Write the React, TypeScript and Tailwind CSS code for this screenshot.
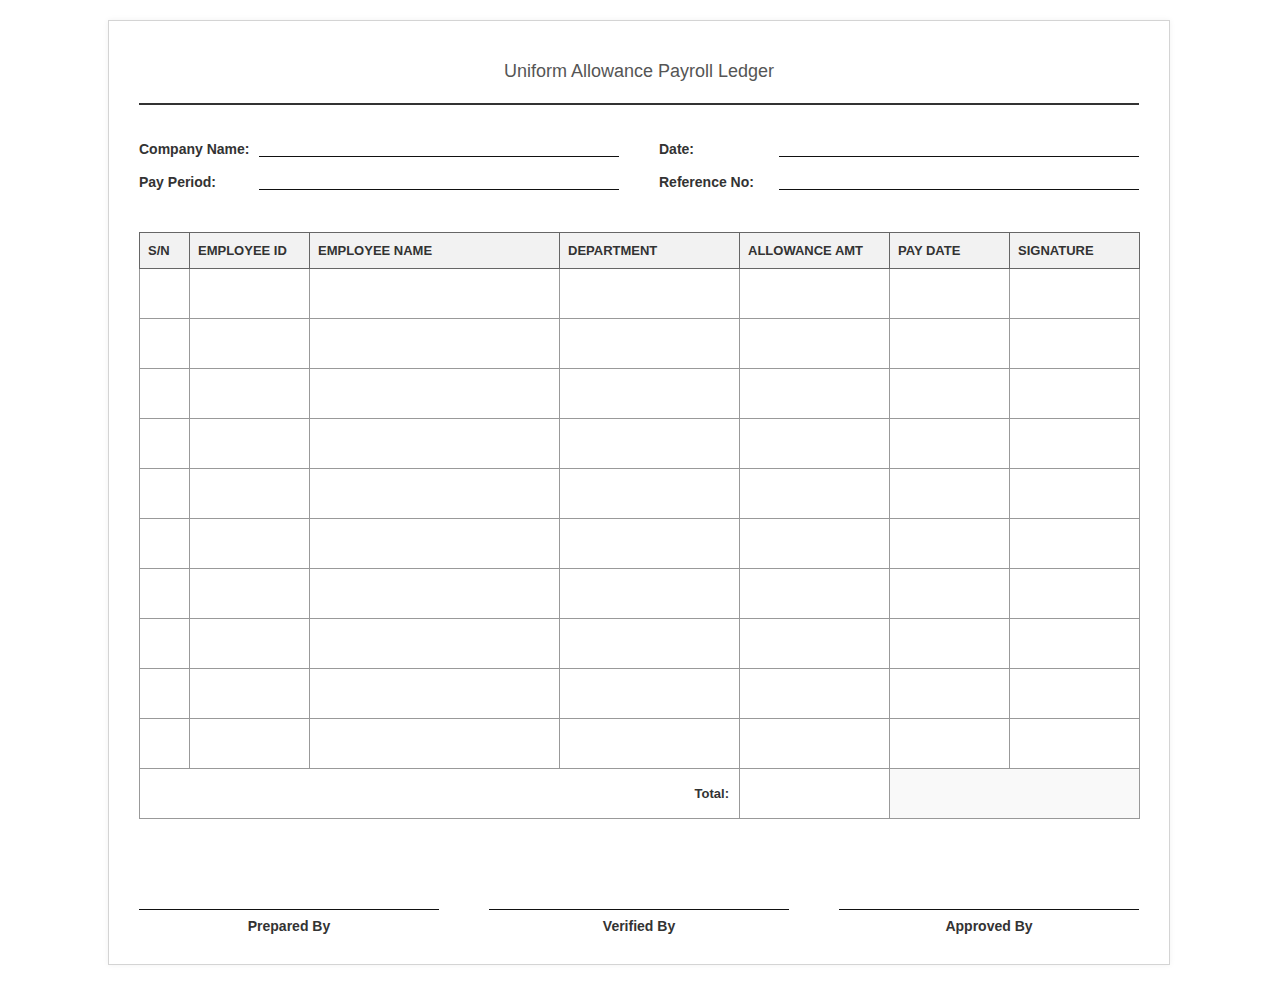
import React from "react";

const cols = [
  { label: "S/N", w: "w-[50px]" },
  { label: "EMPLOYEE ID", w: "w-[120px]" },
  { label: "EMPLOYEE NAME", w: "w-[250px]" },
  { label: "DEPARTMENT", w: "w-[180px]" },
  { label: "ALLOWANCE AMT", w: "w-[150px]" },
  { label: "PAY DATE", w: "w-[120px]" },
  { label: "SIGNATURE", w: "w-[130px]" },
];

function Field({ label }: { label: string }) {
  return (
    <div className="flex items-end">
      <div className="w-[120px] shrink-0 text-[14px] font-bold leading-[16px] text-[#333]">{label}</div>
      <div className="h-[16px] flex-1 border-b border-[#111]" />
    </div>
  );
}

export default function App() {
  const rows = Array.from({ length: 10 });
  return (
    <div className="min-h-screen bg-white pt-[20px] pb-[20px]" style={{ fontFamily: '"Liberation Sans", Arial, sans-serif' }}>
      <div className="mx-auto w-[1062px] border border-[#d4d4d4] bg-white p-[30px] shadow-[0_0_6px_rgba(0,0,0,0.06)]">
        <div className="border-b-2 border-[#333] pt-[10px] pb-[21px] text-center text-[18px] leading-[21px] text-[#555]">
          Uniform Allowance Payroll Ledger
        </div>

        <div className="mt-[36px] grid grid-cols-2 gap-x-[40px] gap-y-[17px]">
          <Field label="Company Name:" />
          <Field label="Date:" />
          <Field label="Pay Period:" />
          <Field label="Reference No:" />
        </div>

        <table className="mt-[42px] w-[1000px] table-fixed border-collapse text-[#333]">
          <thead>
            <tr className="h-[36px]">
              {cols.map((c) => (
                <th
                  key={c.label}
                  className={`${c.w} border border-[#666] bg-[#f2f2f2] px-[8px] text-left text-[13px] font-bold leading-[15px]`}
                >
                  {c.label}
                </th>
              ))}
            </tr>
          </thead>
          <tbody>
            {rows.map((_, i) => (
              <tr key={i} className="h-[50px]">
                {cols.map((c) => (
                  <td key={c.label} className="border border-[#999]" />
                ))}
              </tr>
            ))}
            <tr className="h-[50px]">
              <td colSpan={4} className="border border-[#999] pr-[10px] text-right text-[13px] font-bold">
                Total:
              </td>
              <td className="border border-[#999]" />
              <td colSpan={2} className="border border-[#999] bg-[#f9f9f9]" />
            </tr>
          </tbody>
        </table>

        <div className="mt-[90px] flex justify-between">
          {["Prepared By", "Verified By", "Approved By"].map((s) => (
            <div key={s} className="w-[300px] border-t border-[#111] pt-[8px] text-center text-[14px] font-bold leading-[16px] text-[#333]">
              {s}
            </div>
          ))}
        </div>
      </div>
    </div>
  );
}
